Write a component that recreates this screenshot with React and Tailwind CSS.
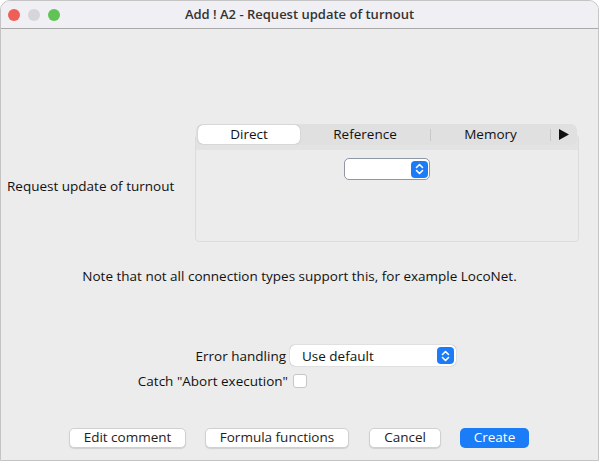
const font = { fontFamily: '"Open Sans", "Liberation Sans", Arial, sans-serif' };

const Stepper = () => (
  <span className="flex h-[17px] w-[17px] items-center justify-center rounded-[4px] bg-[#1c7cf7]">
    <svg width="9" height="12" viewBox="0 0 9 12" fill="none" stroke="white" strokeWidth="1.6" strokeLinecap="round" strokeLinejoin="round">
      <path d="M1.5 4.5 L4.5 1.5 L7.5 4.5" />
      <path d="M1.5 7.5 L4.5 10.5 L7.5 7.5" />
    </svg>
  </span>
);

const Button = ({ children, primary, w }) => (
  <button
    className={
      (primary
        ? "rounded-[5px] bg-[#1a7cf6] text-white"
        : "rounded-[5px] border border-[#d0d0d0] bg-white text-[#222] shadow-[0_1px_1px_rgba(0,0,0,0.12)]") +
      " flex h-[20px] items-center justify-center text-[13.5px] " +
      w
    }
  >
    {children}
  </button>
);

export default function App() {
  return (
    <div className="h-[462px] w-[599px] bg-white" style={font}>
      <div className="flex h-[461px] w-[599px] flex-col overflow-hidden rounded-t-[10px] border border-[#c4c4c4] bg-[#ececec]">
        {/* title bar */}
        <div className="relative flex h-[28px] shrink-0 items-center border-b border-[#a9a9a9] bg-[#f0eff3]">
          <div className="flex gap-[8px] pl-[7px]">
            <span className="h-[12px] w-[12px] rounded-full bg-[#ee5f57]" />
            <span className="h-[12px] w-[12px] rounded-full bg-[#d6d5d9]" />
            <span className="h-[12px] w-[12px] rounded-full bg-[#5fc355]" />
          </div>
          <div className="absolute inset-0 flex items-center justify-center text-[13px] font-semibold text-[#333]">
            Add ! A2 - Request update of turnout
          </div>
        </div>

        {/* main row */}
        <div className="flex items-center pt-[92px]">
          <div className="w-[194px] pl-[6px] pt-[10px] text-[13.5px] text-[#111]">Request update of turnout</div>
          <div className="relative h-[121px] w-[384px]">
            <div className="absolute left-[0px] top-[13px] h-[108px] w-[384px] rounded-[4px] border border-[#dcdcdc] bg-[#ececec]">
              <div className="h-[15px] bg-[#e3e3e3]" />
              <div className="flex justify-center pt-[8px]">
                <div className="flex h-[22px] w-[86px] items-center justify-end rounded-[5px] border border-[#8e97a6] bg-white pr-[1px]">
                  <Stepper />
                </div>
              </div>
            </div>
            <div className="absolute left-[1px] top-[3px] flex h-[21px] w-[381px] items-center rounded-[6px] bg-[#e0e0e0] text-[13.5px] text-[#111]">
              <div className="ml-[2px] flex h-[19px] w-[102px] items-center justify-center rounded-[5px] bg-white shadow-[0_0_1px_rgba(0,0,0,0.4)]">
                Direct
              </div>
              <div className="flex w-[130px] justify-center">Reference</div>
              <span className="h-[12px] w-px bg-[#c8c8c8]" />
              <div className="flex w-[119px] justify-center">Memory</div>
              <span className="h-[12px] w-px bg-[#c8c8c8]" />
              <svg className="ml-[8px]" width="10" height="11" viewBox="0 0 10 11">
                <path d="M0 0 L10 5.5 L0 11 Z" fill="#111" />
              </svg>
            </div>
          </div>
        </div>

        <div className="pt-[24px] text-center text-[13.5px] text-[#111]">
          Note that not all connection types support this, for example LocoNet.
        </div>

        {/* error handling */}
        <div className="mt-[59px] flex items-center">
          <div className="w-[289px] pr-[4px] text-right text-[13.5px] text-[#111]">Error handling</div>
          <div className="flex h-[21px] w-[166px] items-center justify-between rounded-[5px] bg-white pl-[12px] pr-[2px] text-[13.5px] text-[#111] shadow-[0_0_1px_rgba(0,0,0,0.5)]">
            Use default
            <Stepper />
          </div>
        </div>
        <div className="mt-[5px] flex items-center">
          <div className="w-[289px] pr-[2px] text-right text-[13.5px] text-[#111]">Catch "Abort execution"</div>
          <span className="ml-[3px] h-[14px] w-[14px] rounded-[3px] border border-[#c6c6c6] bg-white" />
        </div>

        {/* buttons */}
        <div className="mt-[36px] flex pl-[68px]">
          <Button w="w-[117px]">Edit comment</Button>
          <div className="w-[19px]" />
          <Button w="w-[144px]">Formula functions</Button>
          <div className="w-[20px]" />
          <Button w="w-[72px]">Cancel</Button>
          <div className="w-[19px]" />
          <Button primary w="w-[69px]">Create</Button>
        </div>
      </div>
    </div>
  );
}
